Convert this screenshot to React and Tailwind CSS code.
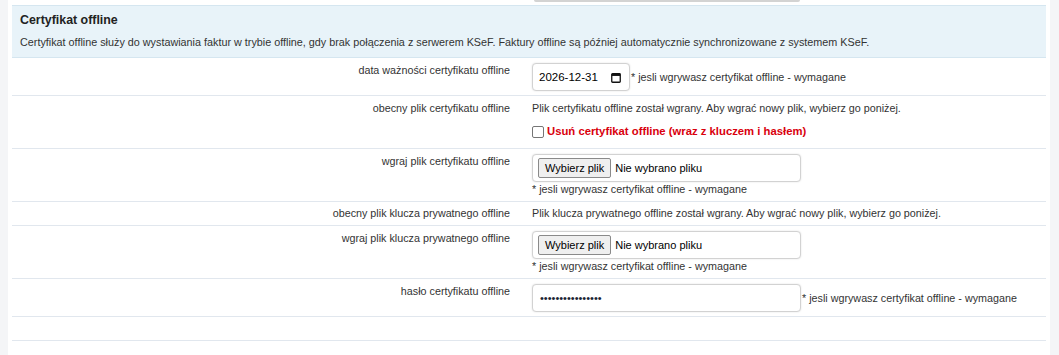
const hint = "* jesli wgrywasz certyfikat offline - wymagane";

function Label({ children }) {
  return (
    <div className="pr-3 text-right text-[10.75px] leading-[15px] text-[#333]">{children}</div>
  );
}

function Row({ label, children, className = "pt-[5px]" }) {
  return (
    <div className={`grid grid-cols-[510px_1fr] border-b border-[#e1e7ee] pb-1 ${className}`}>
      <Label>{label}</Label>
      <div className="pl-2.5 text-[10.75px] leading-[15px] text-[#333]">{children}</div>
    </div>
  );
}

function FileBox() {
  return (
    <div className="flex h-[28px] w-[269px] items-center rounded-[4px] border border-[#d2d2d2] bg-white px-[5px] shadow-[0_0_2px_rgba(0,0,0,0.12)]">
      <span className="flex h-[20px] items-center rounded-[2px] border border-[#8a8a8a] bg-[#efefef] px-[6px] text-[11px] text-black">
        Wybierz plik
      </span>
      <span className="ml-[4px] text-[11px] text-black">Nie wybrano pliku</span>
    </div>
  );
}

function CalendarIcon() {
  return (
    <svg width="10" height="11" viewBox="0 0 10 11" className="text-[#111]">
      <rect x="0.75" y="1.75" width="8.5" height="8.5" rx="0.8" fill="none" stroke="currentColor" strokeWidth="1.3" />
      <rect x="0.75" y="1.75" width="8.5" height="2.2" fill="currentColor" />
    </svg>
  );
}

export default function App() {
  return (
    <div className="flex h-[355px] w-[1059px] bg-[#f4f5f7] font-['Liberation_Sans',Arial,sans-serif]">
      <div className="ml-2 w-[1042px] bg-white px-1">
        {/* bottom edge of previous field */}
        <div className="h-[5px]">
          <div className="ml-[522px] h-[2px] w-[266px] rounded-b-[3px] bg-[#d3d3d3]" />
        </div>

        {/* section header */}
        <div className="border-y border-[#d5e6f0] bg-[#e8f3f9] px-2 pt-[5px] pb-[7px]">
          <div className="text-[12.4px] font-bold leading-[18px] text-[#222]">Certyfikat offline</div>
          <div className="mt-[6px] text-[10.8px] leading-[15px] text-[#333]">
            Certyfikat offline służy do wystawiania faktur w trybie offline, gdy brak połączenia z serwerem KSeF. Faktury offline są później automatycznie synchronizowane z systemem KSeF.
          </div>
        </div>

        <Row label="data ważności certyfikatu offline">
          <div className="flex items-center">
            <div className="flex h-[28px] w-[98px] items-center rounded-[4px] border border-[#d2d2d2] bg-white pl-[6px] pr-[8px] shadow-[0_0_2px_rgba(0,0,0,0.12)]">
              <span className="text-[11.5px] text-black">2026-12-31</span>
              <span className="ml-auto flex">
                <CalendarIcon />
              </span>
            </div>
            <span className="ml-[1px]">{hint}</span>
          </div>
        </Row>

        <Row label="obecny plik certyfikatu offline">
          <div>Plik certyfikatu offline został wgrany. Aby wgrać nowy plik, wybierz go poniżej.</div>
          <label className="mt-2 mb-[5px] flex items-center">
            <span className="h-[12px] w-[12px] rounded-[2px] border border-[#767676] bg-white" />
            <span className="ml-[3px] text-[11.3px] font-bold text-[#d9000d]">Usuń certyfikat offline (wraz z kluczem i hasłem)</span>
          </label>
        </Row>

        <Row label="wgraj plik certyfikatu offline">
          <FileBox />
          <div>{hint}</div>
        </Row>

        <Row label="obecny plik klucza prywatnego offline" className="pt-1">
          <div>Plik klucza prywatnego offline został wgrany. Aby wgrać nowy plik, wybierz go poniżej.</div>
        </Row>

        <Row label="wgraj plik klucza prywatnego offline">
          <FileBox />
          <div>{hint}</div>
        </Row>

        <Row label="hasło certyfikatu offline">
          <div className="flex items-center">
            <div className="flex h-[28px] w-[269px] items-center rounded-[4px] border border-[#d2d2d2] bg-white px-[7px] shadow-[0_0_2px_rgba(0,0,0,0.12)]">
              <span className="text-[11px] text-[#1a2433]">••••••••••••••••</span>
            </div>
            <span className="ml-[1px]">{hint}</span>
          </div>
        </Row>

        <Row label="" className="pt-1">
          <div>&nbsp;</div>
        </Row>
      </div>
    </div>
  );
}
